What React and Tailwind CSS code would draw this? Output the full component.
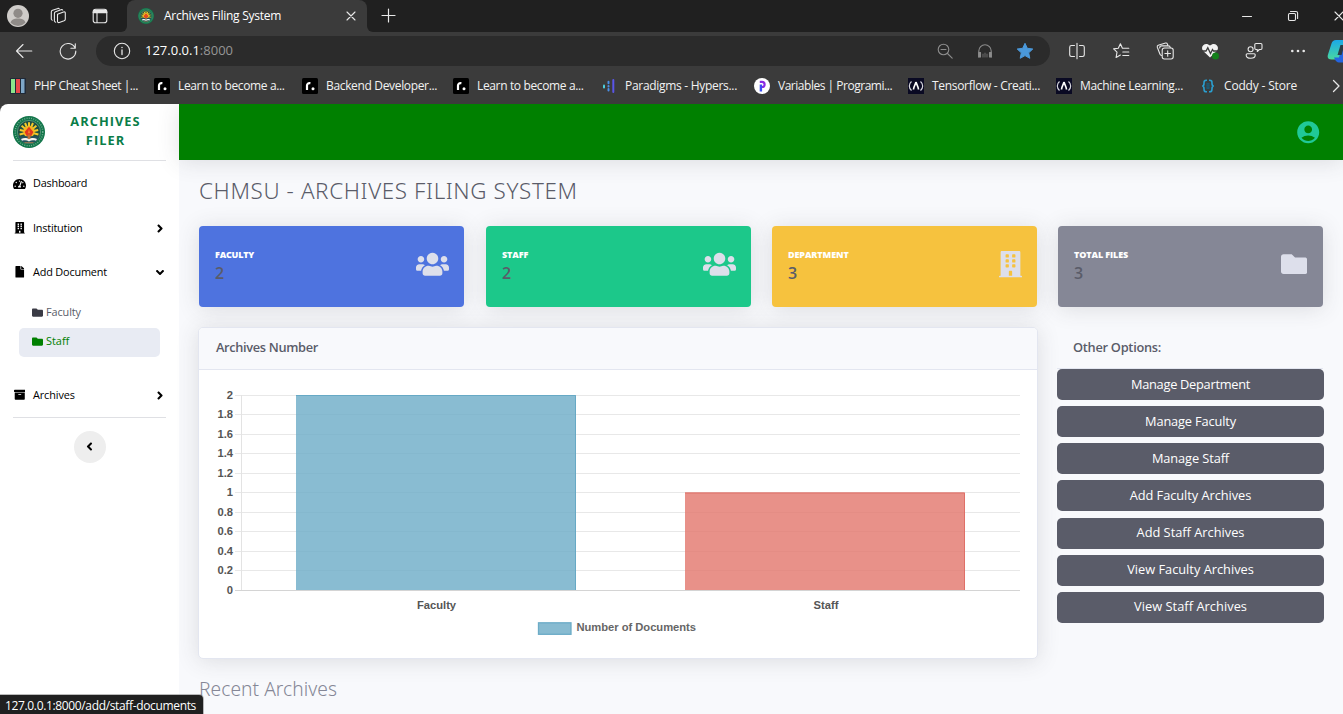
import {
  FaTachometerAlt, FaBuilding, FaFile, FaAngleRight, FaAngleDown, FaAngleLeft,
  FaFolder, FaArchive, FaUsers,
} from 'react-icons/fa';
import { MdAccountCircle } from 'react-icons/md';

/* ---------- Browser chrome ---------- */

function Ico({ children, size = 18, className = '' }) {
  return (
    <svg width={size} height={size} viewBox="0 0 18 18" fill="none" stroke="#e8e8e8" strokeWidth="1.1" strokeLinecap="round" strokeLinejoin="round" className={'shrink-0 ' + className}>
      {children}
    </svg>
  );
}

function Seal({ size }) {
  return (
    <svg width={size} height={size} viewBox="0 0 32 32" className="shrink-0">
      <circle cx="16" cy="16" r="16" fill="#12754a" />
      <circle cx="16" cy="16" r="13.8" fill="none" stroke="#6fae90" strokeWidth="1.4" strokeDasharray="1 1.3" />
      <circle cx="16" cy="16" r="11.6" fill="#1d4f42" stroke="#8fbfa6" strokeWidth="0.5" />
      <g stroke="#f3c92b" strokeWidth="2">
        <path d="M16 16L6.600 18.500M16 16L6.800 14M16 16L8.600 9.800M16 16L12 7M16 16V6.200M16 16L20 7M16 16L23.400 9.800M16 16L25.200 14M16 16L25.400 18.500" />
      </g>
      <circle cx="16" cy="15.6" r="5.8" fill="#f3b521" />
      <path d="M16 10.800l4.400 5.200-2.200 4h-4.400l-2.200-4z" fill="#e2361f" />
      <path d="M16 13l1.300 4.200h-2.600z" fill="#f07a2a" />
      <path d="M5.200 20.200h21.600a11.600 11.600 0 0 1-21.600 0z" fill="#23505c" />
      <path d="M14.600 18.500h2.800v4.500h-2.800z" fill="#c07038" />
      <path d="M8 23c3-1.400 6-1.200 8 .3 2-1.500 5-1.700 8-.3l-1 1.800c-2.600-.8-5-.6-7 .6-2-1.200-4.400-1.400-7-.6z" fill="#f5f5f0" />
      <path d="M11.500 26.700h9" stroke="#c98a4a" strokeWidth="0.8" />
    </svg>
  );
}

function SheetMark() {
  return (
    <svg width="16" height="16" viewBox="0 0 16 16">
      <rect width="16" height="16" rx="1" fill="#1f2937" />
      <path fill="#8be58b" d="M1 1h4v14H1z" /><path fill="#e8484a" d="M6 1h4v14H6z" /><path fill="#7ea6c6" d="M11 1h3.500v14H11z" />
    </svg>
  );
}
function RoadmapMark() {
  return (
    <svg width="16" height="16" viewBox="0 0 16 16">
      <rect width="16" height="16" rx="1.5" fill="#000" />
      <path d="M5 12V7.500C5 5.700 6.200 4.900 8.400 5.200" stroke="#fff" strokeWidth="2.2" fill="none" />
      <circle cx="11" cy="10.800" r="1.5" fill="#fff" />
    </svg>
  );
}
function HyperMark() {
  return (
    <svg width="16" height="16" viewBox="0 0 16 16" strokeLinecap="round" strokeWidth="2" fill="none">
      <path d="M3 7.500v2" stroke="#4fd0e0" /><path d="M7.500 3.800v1.500M7.500 8v.5M7.500 11v1.500" stroke="#4a90e8" /><path d="M12.300 2v12" stroke="#5a55e8" />
    </svg>
  );
}
function ProgramizMark() {
  return (
    <svg width="16" height="16" viewBox="0 0 16 16">
      <circle cx="8" cy="8" r="8" fill="#fff" />
      <path d="M5.800 3.800H8a2.600 2.600 0 0 1 0 5.200H6.900" stroke="#8a2be2" strokeWidth="2.2" fill="none" />
      <path d="M6.900 6.500v7" stroke="#3b4ef0" strokeWidth="2.4" />
    </svg>
  );
}
function CampMark() {
  return (
    <svg width="16" height="16" viewBox="0 0 16 16" fill="none">
      <rect width="16" height="16" fill="#0a0a23" />
      <path d="M3.500 3.500C.6 6 .6 10 3.500 12.500M12.500 3.500c2.900 2.500 2.900 6.500 0 9" stroke="#d8d8e0" strokeWidth="1.2" />
      <path d="M8 4c.6 2.600 2.300 4.500 2.500 7.500M8 4c-.6 2.600-2.300 4.500-2.500 7.500" stroke="#fff" strokeWidth="1.700" />
    </svg>
  );
}
function CoddyMark() {
  return (
    <svg width="16" height="16" viewBox="0 0 16 16" fill="none" stroke="#2b9fd0" strokeWidth="1.6">
      <path d="M7 2.200C4 2 4 3.500 4 5.500S3.200 8 2.200 8C3.200 8 4 8.500 4 10.500s0 3.500 3 3.300M9 2.200c3-.2 3 1.300 3 3.300S12.800 8 13.800 8C12.800 8 12 8.500 12 10.500s0 3.500-3 3.300" />
      <path d="M6.500 5l3 2-3 2 3 2M9.500 5l-3 2 3 2-3 2" stroke="#1d5a74" strokeWidth="1.1" />
    </svg>
  );
}

const bookmarks = [
  { icon: <SheetMark />, text: 'PHP Cheat Sheet |...', box: 'w-[144px]', track: 'tracking-[-0.45px]' },
  { icon: <RoadmapMark />, text: 'Learn to become a...', box: 'w-[148px]', track: 'tracking-[-0.36px]' },
  { icon: <RoadmapMark />, text: 'Backend Developer...', box: 'w-[151px]', track: 'tracking-[-0.34px]' },
  { icon: <RoadmapMark />, text: 'Learn to become a...', box: 'w-[148px]', track: 'tracking-[-0.36px]' },
  { icon: <HyperMark />, text: 'Paradigms - Hypers...', box: 'w-[153px]', track: 'tracking-[-0.3px]' },
  { icon: <ProgramizMark />, text: 'Variables | Programi...', box: 'w-[154px]', track: 'tracking-[-0.48px]' },
  { icon: <CampMark />, text: 'Tensorflow - Creati...', box: 'w-[148px]', track: 'tracking-[-0.31px]' },
  { icon: <CampMark />, text: 'Machine Learning...', box: 'w-[144px]', track: 'tracking-[-0.32px]' },
  { icon: <CoddyMark />, text: 'Coddy - Store', box: 'w-[130px]', track: 'tracking-[-0.17px]' },
];

function TabStrip() {
  return (
    <div className="flex h-8 shrink-0 bg-[#202020]">
      <div className="flex w-[121px] items-center pl-[7px]">
        <svg width="22" height="22" viewBox="0 0 22 22">
          <circle cx="11" cy="11" r="11" fill="#cfccc9" />
          <circle cx="11" cy="8.300" r="4.600" fill="#8f8b88" />
          <path d="M3.600 17.800C4.300 14.600 7 13.600 11 13.600s6.700 1 7.400 4.200A10.800 10.800 0 0 1 11 21a10.800 10.800 0 0 1-7.400-3.200z" fill="#8f8b88" />
        </svg>
        <Ico className="ml-5">
          <path d="M8.500 7.200l6-2.200q1.800-.4 1.800 1v6.200q0 1-1.200 1.500l-4.800 1.800q-1.800.4-1.800-1.200zM5.400 13.800V6.500q0-1.200 1.200-1.700l6-2.300M2.300 12V5q0-1.200 1.200-1.700L9 1.400M2.300 12q.1 1 1 1.200M5.400 13.800q.1 1.200 1.300 1.400M12.600 2.500q.8-.1 1.100.6M9 1.400q.9-.1 1.200.4" />
        </Ico>
        <Ico className="ml-6">
          <rect x="2.200" y="2.200" width="13.600" height="13.600" rx="2.600" />
          <path d="M3.200 3.800h11.600M2.600 5.200h12.800" strokeWidth="2" /><path d="M6 6v9.500" />
        </Ico>
      </div>
      <div className="w-[6px] bg-[#3b3b3b]"><div className="h-8 rounded-br-[6px] bg-[#202020]" /></div>
      <div className="flex w-[240px] items-center rounded-t-lg bg-[#3b3b3b] pl-[11px]">
        <Seal size={16} />
        <span className="ml-[10px] flex-1 whitespace-nowrap text-[12px] tracking-[-0.27px] text-white">Archives Filing System</span>
        <Ico className="mr-[7px]"><path d="M5 5l8 8M13 5l-8 8" /></Ico>
      </div>
      <div className="w-[6px] bg-[#3b3b3b]"><div className="h-8 rounded-bl-[6px] bg-[#202020]" /></div>
      <Ico className="ml-[6px] mt-[6px]"><path d="M9.500 3v13M3 9.500h13" strokeWidth="1.200" /></Ico>
      <div className="ml-auto flex w-[119px] items-center overflow-hidden">
        <div className="flex w-[46px] shrink-0 justify-center"><Ico><path d="M4.500 9.500h9" /></Ico></div>
        <div className="flex w-[46px] shrink-0 justify-center">
          <Ico><rect x="4.500" y="6.500" width="7" height="7" rx="1.200" /><path d="M6.500 4.500H12a1.600 1.600 0 0 1 1.600 1.600v5.400" /></Ico>
        </div>
        <div className="flex w-[46px] shrink-0 justify-center"><Ico><path d="M5 5l8 8M13 5l-8 8" /></Ico></div>
      </div>
    </div>
  );
}

function AddressRow() {
  const cell = 'flex w-[44.2px] shrink-0 justify-center';
  return (
    <div className="flex h-[38px] shrink-0 items-center overflow-hidden">
      <div className="flex w-[96px] shrink-0 items-center pl-[15px]">
        <Ico><path d="M1.500 9h15.300M8 2.500L1.500 9 8 15.500" /></Ico>
        <Ico className="ml-[26px]"><path d="M16 5.800A7.800 7.800 0 1 0 16.800 9M16.300 1.800v4.400h-4.400" /></Ico>
      </div>
      <div className="flex h-[30px] w-[954px] shrink-0 items-center rounded-full bg-[#2b2b2b] pl-[17px] pr-[16px]">
        <Ico><circle cx="9" cy="9" r="7.700" /><path d="M9 8v4.600" strokeWidth="1.300" /><path d="M9 5.400v.2" strokeWidth="1.500" /></Ico>
        <span className="ml-[14px] flex-1 whitespace-nowrap text-[13px] text-white">127.0.0.1<span className="text-[#969696]">:8000</span></span>
        <Ico className="stroke-[#8c8c8c]"><circle cx="7.500" cy="7.500" r="5.300" /><path d="M11.500 11.500l4.700 4.700M5 7.500h5" /></Ico>
        <Ico className="ml-[22px] stroke-[#8c8c8c]">
          <path d="M2.800 15V9a6.200 6.200 0 0 1 12.400 0v6" /><path d="M2.800 10.500h1.700v4.500H2.800zM13.500 10.500h1.700v4.500h-1.700z" fill="#8c8c8c" /><path d="M7 12v3M9 11v4M11 12v3" stroke="#666" />
        </Ico>
        <svg width="18" height="18" viewBox="0 0 18 18" className="ml-[22px] shrink-0">
          <path d="M9 1.300l2.300 5 5.500.7-4.100 3.800 1.100 5.500L9 13.600l-4.800 2.700 1.100-5.500L1.200 7l5.500-.7z" fill="#4a98da" stroke="#4a98da" strokeWidth="1" strokeLinejoin="round" />
        </svg>
      </div>
      <div className="ml-[5px] flex flex-1 items-center">
        <div className={cell}><Ico><path d="M9 1.200v15.600M6.500 3.500H3.400q-1.700 0-1.700 1.700v7.600q0 1.700 1.700 1.700h3.100M11.500 3.500h3.100q1.700 0 1.700 1.700v7.600q0 1.700-1.700 1.700h-3.100" /></Ico></div>
        <div className={cell}><Ico><path d="M11 6.200h-.6L8.400 1.800 6.300 6.200l-4.700.7L5 10.100l-.9 5.400 4.300-2.400M11 6.300h5.800M10.800 10h6M10.800 13.500h6" /></Ico></div>
        <div className={cell}>
          <Ico><rect x="6.200" y="6" width="11" height="11" rx="2.200" /><path d="M11.700 8.700v5.600M8.900 11.500h5.600M4 12.300L1.300 5.200Q.9 3.900 2.200 3.300L9.600 1q1.400-.3 1.800 1l.6 1.700M5.600 13.500q-.7-.1-1.200-.8M3.700 5.900q0-2 1.900-2h6.800q1.600 0 1.900 1.700" /></Ico>
        </div>
        <div className={cell}>
          <svg width="18" height="18" viewBox="0 0 18 18" className="shrink-0">
            <path d="M9 15.600L2.200 9C-1.600 4.400 4.600-.8 9 3.600c4.400-4.400 10.600.8 6.800 5.400z" fill="#f2f2f2" />
            <path d="M0 9h5l1.800-3.300L9.500 11.500 11.500 7.500l1 1.500H18" stroke="#3b3b3b" strokeWidth="1.300" fill="none" />
            <circle cx="14.500" cy="14" r="3.500" fill="#13801a" />
          </svg>
        </div>
        <div className={cell}>
          <Ico><circle cx="5.600" cy="7.200" r="2.500" /><path d="M2.200 11.800h7q1 0 1 1v.4q0 3-4.500 3t-4.500-3v-.4q0-1 1-1zM11 1.500h4.800q1.200 0 1.200 1.200v3.600q0 1.200-1.200 1.200h-1.500l-2 2v-2H11q-1.200 0-1.200-1.200V2.700q0-1.200 1.200-1.200z" /></Ico>
        </div>
        <div className={cell}><Ico><g fill="#e8e8e8" stroke="none"><circle cx="3.300" cy="9" r="1.300" /><circle cx="9" cy="9" r="1.300" /><circle cx="14.700" cy="9" r="1.300" /></g></Ico></div>
        <svg width="24" height="24" viewBox="0 0 24 24" className="ml-[7px] shrink-0">
          <defs>
            <linearGradient id="cp" x1="0" y1="0" x2="0" y2="1"><stop offset="0" stopColor="#1ba8e8" /><stop offset="1" stopColor="#48d8a0" /></linearGradient>
          </defs>
          <path d="M9 1h10l-5 15.500q-1.200 4-5 4H4.500Q-.5 20.500 1 15.500L4.500 4.500Q5.500 1 9 1z" fill="url(#cp)" />
          <path d="M7 18.500h5l3-12h8v17H12q-3 0-5-5z" fill="#2464e0" /><path d="M10.500 16l3-10h4l-3 10z" fill="#2b3c46" />
        </svg>
      </div>
    </div>
  );
}

function BookmarksBar() {
  return (
    <div className="flex h-[34px] shrink-0 items-center overflow-hidden pb-[2px] pl-[10px]">
      {bookmarks.map((b, i) => (
        <div key={i} className={'flex shrink-0 items-center gap-2 ' + b.box}>
          {b.icon}
          <span className={'whitespace-nowrap text-[12px] text-[#f2f2f2] ' + b.track}>{b.text}</span>
        </div>
      ))}
      <Ico><path d="M3.500 3.500L9 9l-5.500 5.500" strokeWidth="1.300" /></Ico>
    </div>
  );
}

/* ---------- Page ---------- */

function NavItem({ icon, label, arrow, box = 'h-11', track }) {
  return (
    <div className={'flex items-center ' + box}>
      <span className="flex w-[13px] justify-center text-[11.5px]">{icon}</span>
      <span className={'ml-[7px] flex-1 whitespace-nowrap text-[10.88px] ' + track}>{label}</span>
      <span className="flex w-3 justify-center text-[13px]">{arrow}</span>
    </div>
  );
}

function Sidebar() {
  return (
    <aside className="flex w-[179px] shrink-0 flex-col rounded-tl-lg bg-white px-[13px] text-black">
      <div className="flex h-14 shrink-0 items-center">
        <Seal size={32} />
        <div className="-mt-[2px] ml-6 w-[73px] text-center text-[12.8px] font-bold leading-[19.2px] tracking-[1.05px] text-[#0a7d48]">ARCHIVES FILER</div>
      </div>
      <hr className="border-[#dfe0e4]" />
      <NavItem icon={<FaTachometerAlt className="h-[12px] w-[13px]" />} label="Dashboard" box="h-[45px]" track="tracking-[-0.22px]" />
      <NavItem icon={<FaBuilding />} label="Institution" arrow={<FaAngleRight />} track="tracking-[-0.22px]" />
      <NavItem icon={<FaFile />} label="Add Document" arrow={<FaAngleDown />} track="tracking-[-0.17px]" />
      <div className="mx-[6px] mb-4 mt-[4px] flex flex-col gap-px text-[10.88px]">
        <div className="flex h-[29px] items-center gap-[3px] pl-[13px] tracking-[-0.1px] text-[#5a5c69]"><FaFolder className="text-[11px] text-[#3a3b45]" />Faculty</div>
        <div className="flex h-[29px] items-center gap-[3px] rounded-[5px] bg-[#e8ebf3] pb-[2px] pl-[13px] text-[#008000]"><FaFolder className="text-[11px]" />Staff</div>
      </div>
      <NavItem icon={<FaArchive />} label="Archives" arrow={<FaAngleRight />} track="tracking-[-0.1px]" />
      <hr className="border-[#dfe0e4]" />
      <button className="mx-auto mt-[13px] flex size-8 shrink-0 items-center justify-center rounded-full bg-[#eeeeee] text-[13px]"><FaAngleLeft className="-mt-[2px]" /></button>
    </aside>
  );
}

const cards = [
  { label: 'FACULTY', value: 2, bg: 'bg-[#4e73df]', icon: <FaUsers className="h-[26.4px] w-[33px]" />, track: 'tracking-[-0.22px]' },
  { label: 'STAFF', value: 2, bg: 'bg-[#1cc88a]', icon: <FaUsers className="h-[26.4px] w-[33px]" />, track: 'tracking-[-0.1px]' },
  { label: 'DEPARTMENT', value: 3, bg: 'bg-[#f6c23e]', icon: <FaBuilding className="h-[26.4px] w-[23px]" />, track: 'tracking-[-0.1px]' },
  { label: 'TOTAL FILES', value: 3, bg: 'bg-[#858796]', icon: <FaFolder className="mr-px size-[26.4px]" />, track: 'tracking-[-0.1px]' },
];

function StatCard({ card }) {
  return (
    <div className={'flex h-[81px] w-[265px] items-center justify-between rounded-[4px] pl-[16px] pr-[15px] shadow-[0_2px_22px_rgba(58,59,69,0.15)] ' + card.bg}>
      <div className="-mt-[2px]">
        <div className={'text-[9px] font-extrabold leading-[15px] text-white ' + card.track}>{card.label}</div>
        <div className="text-[16px] font-semibold leading-[22px] text-[#5a5c69]">{card.value}</div>
      </div>
      <div className="-mt-[4px] text-[#dddfeb]">{card.icon}</div>
    </div>
  );
}

const ticks = ['2', '1.8', '1.6', '1.4', '1.2', '1', '0.8', '0.6', '0.4', '0.2', '0'];

function BarChart() {
  const y = (i) => Math.floor(25 + i * 19.5) + 0.5;
  return (
    <svg width="838" height="288" viewBox="0 0 838 288" className="block" fontFamily="Liberation Sans, Arial, sans-serif" fontWeight="bold" fontSize="11.2">
      {ticks.map((t, i) => (
        <g key={t}>
          <path d={`M36 ${y(i)}H821`} stroke={i === 10 ? '#d4d4d4' : '#e8e8e8'} />
          <text x="34" y={28.6 + i * 19.5} textAnchor="end" fill="#555">{t}</text>
        </g>
      ))}
      <path d="M42.500 25V220" stroke="#e3e3e3" />
      <rect x="97" y="25" width="280" height="195" fill="rgba(107,171,199,0.8)" />
      <path d="M97 25.500H376.500V220" fill="none" stroke="#67a9c5" />
      <rect x="486" y="122.500" width="280" height="97.500" fill="rgba(226,118,108,0.8)" />
      <path d="M486 123H765.500V220" fill="none" stroke="#df7068" />
      <text x="237.500" y="239" textAnchor="middle" fill="#555">Faculty</text>
      <text x="627" y="239" textAnchor="middle" fill="#555">Staff</text>
      <rect x="339.500" y="252.800" width="32.500" height="11.500" fill="#88bbd1" stroke="#6cacc7" strokeWidth="1.300" />
      <text x="377.500" y="261" fill="#666" textLength="119.500">Number of Documents</text>
    </svg>
  );
}

const options = [
  { text: 'Manage Department', track: 'tracking-[-0.27px]' },
  { text: 'Manage Faculty', track: 'tracking-[-0.15px]' },
  { text: 'Manage Staff', track: 'tracking-[-0.1px]' },
  { text: 'Add Faculty Archives', track: 'tracking-[-0.05px]' },
  { text: 'Add Staff Archives', track: 'tracking-[0px]' },
  { text: 'View Faculty Archives', track: 'tracking-[0px]' },
  { text: 'View Staff Archives', track: 'tracking-[0.05px]' },
];

function Content() {
  return (
    <div className="flex min-w-0 flex-1 flex-col bg-[#f8f9fc]">
      <header className="flex h-14 shrink-0 items-center justify-end bg-[#008000] pr-[22px] shadow-[0_2px_22px_rgba(58,59,69,0.15)]">
        <MdAccountCircle className="size-[26.4px] text-[#20c997]" />
      </header>
      <div className="flex flex-1 flex-col px-5 pt-[17px] text-[#5a5c69]">
        <h1 className="whitespace-nowrap font-['Noto_Sans',sans-serif] text-[22.4px] font-light leading-[27px] tracking-[0.62px]">CHMSU - ARCHIVES FILING SYSTEM</h1>
        <div className="mt-[22px] grid grid-cols-[287px_286px_286px_265px]">
          {cards.map((c) => <StatCard key={c.label} card={c} />)}
        </div>
        <div className="mt-5 flex gap-[19px]">
          <section className="-ml-px h-[332px] w-[840px] shrink-0 rounded-[5px] border border-[#e3e6f0] bg-white shadow-[0_2px_22px_rgba(58,59,69,0.15)]">
            <h2 className="flex h-[42px] items-center rounded-t-[4px] border-b border-[#e3e6f0] bg-[#f8f9fc] pb-px pl-[17px] text-[12.8px] font-semibold tracking-[-0.34px]">Archives Number</h2>
            <BarChart />
          </section>
          <section className="flex flex-1 flex-col">
            <h2 className="flex h-[42px] shrink-0 items-center border-b border-[#e3e6f0] pl-4 text-[12.8px] font-semibold tracking-[-0.27px]">Other Options:</h2>
            <div className="flex flex-col gap-[6.15px]">
              {options.map((o) => (
                <button key={o.text} className={'-mr-px h-[31px] rounded-[5px] bg-[#5a5c69] pb-[2px] text-[12.8px] leading-[28px] text-white ' + o.track}>{o.text}</button>
              ))}
            </div>
          </section>
        </div>
        <h3 className="mt-[18px] font-['Noto_Sans',sans-serif] text-[19.2px] font-light leading-6 tracking-[0.05px] text-[#858796]">Recent Archives</h3>
      </div>
    </div>
  );
}

export default function App() {
  return (
    <div className="relative flex h-[714px] w-[1343px] flex-col overflow-hidden bg-[#3b3b3b] font-['Open_Sans',sans-serif]">
      <TabStrip />
      <AddressRow />
      <BookmarksBar />
      <div className="flex min-h-0 flex-1 overflow-hidden">
        <Sidebar />
        <Content />
      </div>
      <div className="absolute bottom-0 left-0 flex h-[19px] w-[203px] items-center whitespace-nowrap rounded-tr-[4px] bg-[#202020] pl-[5px] pt-[2px] text-[12px] tracking-[-0.35px] text-white shadow-[0_0_0_1px_rgba(120,120,120,0.5)]">127.0.0.1:8000/add/staff-documents</div>
    </div>
  );
}
